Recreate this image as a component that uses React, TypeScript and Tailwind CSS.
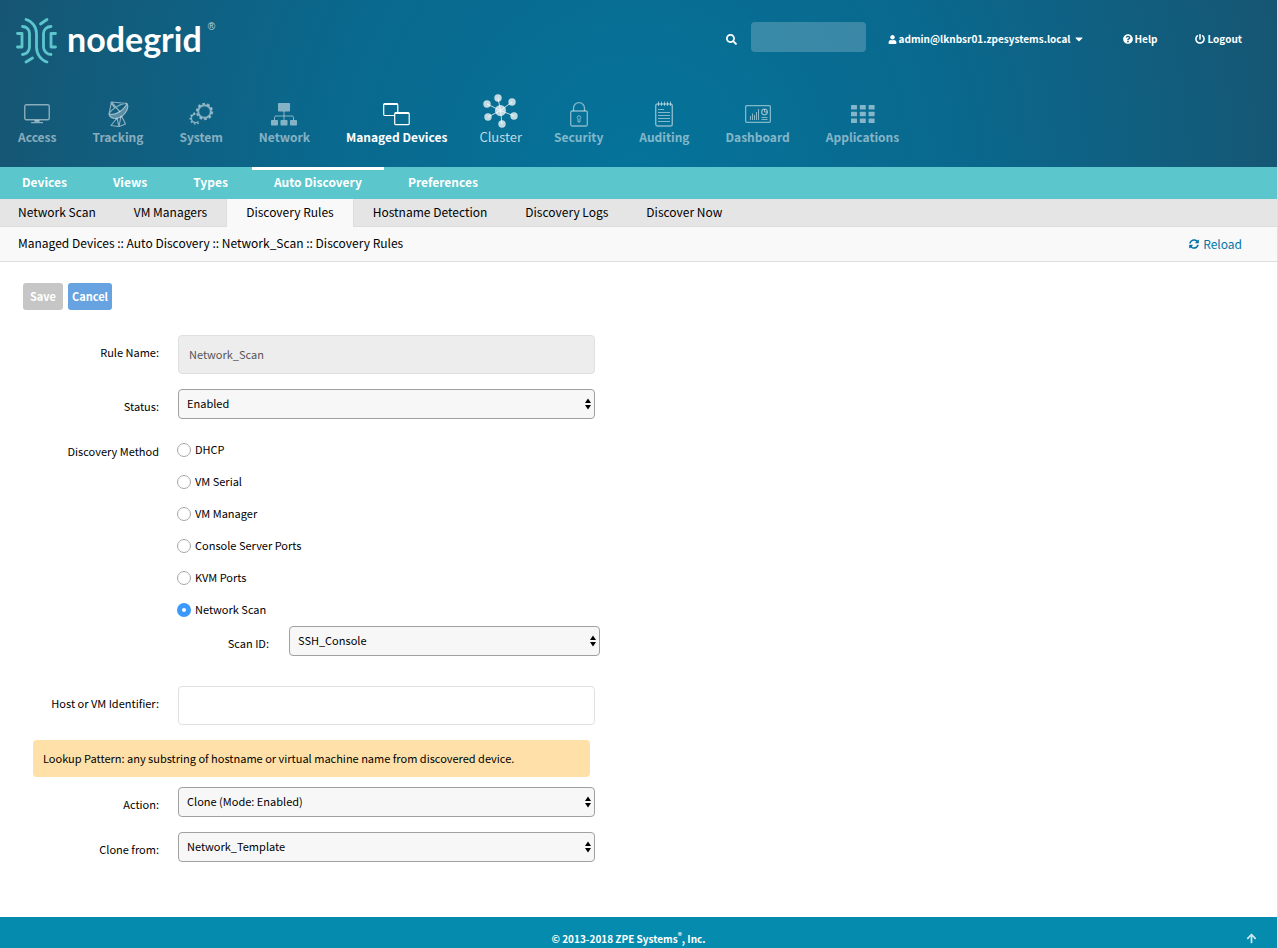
import { useState } from 'react'
import type { ReactNode } from 'react'
import { FaSearch, FaUser, FaCaretDown, FaQuestionCircle, FaPowerOff, FaSyncAlt, FaArrowUp } from 'react-icons/fa'

const clusterNodes = [
  [15, 4],
  [29, 8],
  [31, 22],
  [19, 30],
  [5, 23],
  [4, 10],
]

const icons: Record<string, ReactNode> = {
  Access: (
    <svg width="26" height="20" viewBox="0 0 26 20" fill="none" stroke="currentColor">
      <rect x="0.75" y="0.75" width="24.5" height="15" rx="1.5" strokeWidth="1.4" />
      <path d="M10.5 16h5v2H19v1.2H7V18h3.5z" fill="currentColor" stroke="none" />
    </svg>
  ),
  Tracking: (
    <svg width="22" height="26" viewBox="0 0 22 26" fill="none" stroke="currentColor" strokeWidth="1.2" strokeLinejoin="round">
      <path d="M20 2.5C23 8 16 18 7 17.5 4 17 2.5 15 2 13 8 15 17 9 20 2.5z" fill="currentColor" fillOpacity="0.6" />
      <path d="M20 2.5C15 2 4 8 2 13M2 13 4.5 1 20 2.5M4.5 1 13 11M3.5 1.5 8 7" />
      <path d="M10 17 4 24.5 12 25.5 18.5 23 14.5 15M10 17l2 8.5L14 15" />
    </svg>
  ),
  System: (
    <svg width="26" height="24" viewBox="0 0 26 24" fill="none" stroke="currentColor">
      <circle cx="16.5" cy="9.5" r="6.3" strokeWidth="2" />
      <circle cx="16.5" cy="9.5" r="7.8" strokeWidth="1.8" strokeDasharray="2.8 2.1" />
      <path d="M10.5 19.5A4.3 4.3 0 1 1 7.5 12" strokeWidth="1.4" />
      <path d="M10.8 21A5.5 5.5 0 1 1 7.5 11" strokeWidth="1.4" strokeDasharray="1.7 1.9" />
    </svg>
  ),
  Network: (
    <svg width="26" height="23" viewBox="0 0 26 23" fill="currentColor">
      <rect x="7" y="0" width="12" height="8.5" rx="0.8" />
      <rect x="0" y="17" width="7" height="5.5" rx="0.8" />
      <rect x="9.5" y="17" width="7" height="5.5" rx="0.8" />
      <rect x="19" y="17" width="7" height="5.5" rx="0.8" />
      <path d="M13 8v9M3.5 17v-2.5q0-1.5 1.5-1.5h16q1.5 0 1.5 1.5V17" fill="none" stroke="currentColor" />
    </svg>
  ),
  'Managed Devices': (
    <svg width="27" height="23" viewBox="0 0 27 23" fill="none" stroke="currentColor">
      <path d="M11.5 12.5H2q-1.3 0-1.3-1.3V2Q.7.7 2 .7h11.5q1.3 0 1.3 1.3v7" strokeWidth="1.2" />
      <path d="M1 1.3h13.5M12 10.3h14" strokeWidth="1.5" />
      <rect x="11.7" y="9.7" width="14.5" height="12" rx="1.3" strokeWidth="1.2" />
    </svg>
  ),
  Cluster: (
    <svg width="35" height="34" viewBox="0 0 35 34" fill="currentColor" stroke="currentColor">
      {clusterNodes.map(([x, y]) => (
        <g key={`${x}-${y}`}>
          <path d={`M17.5 16.5 ${x} ${y}`} strokeWidth="1" />
          <circle cx={x} cy={y} r="3.7" stroke="none" />
        </g>
      ))}
      <circle cx="17.5" cy="16.5" r="5.5" stroke="none" />
    </svg>
  ),
  Security: (
    <svg width="18" height="25" viewBox="0 0 18 25" fill="none" stroke="currentColor" strokeWidth="1.3">
      <rect x="0.7" y="9" width="16.6" height="15" rx="1.5" />
      <path d="M3.5 9V6.2a5.5 5.5 0 0 1 11 0V9" />
      <path d="M8 20v-3.2a1.7 1.7 0 1 1 2 0V20z" strokeWidth="1" />
    </svg>
  ),
  Auditing: (
    <svg width="18" height="26" viewBox="0 0 18 26" fill="none" stroke="currentColor">
      <rect x="0.7" y="3" width="16.6" height="22" rx="2" strokeWidth="1.4" />
      <path d="M3.5.5V5M6.5.5V5M9.5.5V5M12.5.5V5M15.5.5V5" />
      <path d="M3 8.5h6M3 11.5h12M3 14.5h12M3 17.5h12M3 20.5h12" />
    </svg>
  ),
  Dashboard: (
    <svg width="26" height="18" viewBox="0 0 26 18" fill="none" stroke="currentColor">
      <rect x="0.6" y="0.6" width="24.8" height="16.8" rx="1.5" strokeWidth="1.3" />
      <path d="M5.5 15v-4M7.5 15V8.5M9.5 15v-5M11.5 15V7M13.5 15V4" />
      <circle cx="19.5" cy="7" r="2.8" strokeWidth="1.3" />
      <path d="M19.5 4v3h3M16.5 12.5h6M16.5 14.5h6" />
    </svg>
  ),
  Applications: (
    <svg width="24" height="18" viewBox="0 0 24 18" fill="currentColor">
      {[0, 6.8, 13.6].map((y) => [0, 8.8, 17.6].map((x) => <rect key={`${x}-${y}`} x={x} y={y} width="6" height="4.4" rx="0.5" />))}
    </svg>
  ),
}

const mainNav = Object.keys(icons)
const subNav = ['Devices', 'Views', 'Types', 'Auto Discovery', 'Preferences']
const tabs = ['Network Scan', 'VM Managers', 'Discovery Rules', 'Hostname Detection', 'Discovery Logs', 'Discover Now']
const methods = ['DHCP', 'VM Serial', 'VM Manager', 'Console Server Ports', 'KVM Ports', 'Network Scan']

function Logo() {
  return (
    <a href="#" className="flex items-start text-white">
      <svg width="41" height="47" viewBox="0 0 41 47" fill="none" stroke="#5cc6cc" strokeWidth="2.8" strokeLinecap="round" strokeLinejoin="round">
        <path d="M1.5 16.5H6V30H1.5M39.5 16.5H35V30h4.5" />
        <path d="M6.5 9.5c4 0 7 3 7 7V30c0 4-3 7.5-7 7.5M35 9.5c-4 0-7.5 3-7.5 7V30c0 4 3.5 7.5 7.5 7.5" />
        <path d="M10 2.5c6 1.5 10.5 7.5 10.5 14V30c0 7 4.5 13.500 10.500 15" />
        <path d="M24.5 7 31 2.5M10 45l6.500-4" />
      </svg>
      <span className="ml-2.5 font-[Lato] text-[34px] leading-[44px] font-bold">nodegrid</span>
      <span className="ml-1.5 font-['Liberation_Sans',sans-serif] text-[10px] leading-5 opacity-70">®</span>
    </a>
  )
}

function Select({ id, value }: { id: string; value: string }) {
  return (
    <div className="relative">
      <select
        id={id}
        defaultValue={value}
        className="block h-[30px] w-full appearance-none rounded border border-[#a0a0a0] bg-[#f7f7f7] px-2 pb-0.5 text-[11px]"
      >
        <option>{value}</option>
      </select>
      <svg className="pointer-events-none absolute right-1 top-[9px]" width="6" height="12" viewBox="0 0 6 12">
        <path d="M3 0.5l3 4.5H0zM3 11.5l3-4.5H0z" />
      </svg>
    </div>
  )
}

function Row({ label, id, children }: { label: string; id: string; children: ReactNode }) {
  return (
    <div className="flex gap-[19px]">
      <label htmlFor={id} className="w-[159px] shrink-0 pt-[9px] text-right">
        {label}
      </label>
      <div className="w-full max-w-[417px]">{children}</div>
    </div>
  )
}

export default function App() {
  const [method, setMethod] = useState('Network Scan')

  return (
    <div className="flex min-h-screen flex-col border-r border-[#dddddd] bg-white font-['Noto_Sans_CJK_SC',sans-serif] text-[11px] leading-4 text-black">
      {/* Header */}
      <header className="flex h-[167px] flex-col justify-between bg-[radial-gradient(circle_at_50%_100%,#05739a_0%,#0a688d_50%,#165673_100%)] text-white">
        <div className="flex items-start justify-between pl-4 pr-[35px] pt-[17px]">
          <Logo />
          <div className="flex items-center pt-[5px] text-[10px] font-bold">
            <label htmlFor="search" aria-label="Search" className="pt-1">
              <FaSearch size={11} />
            </label>
            <input id="search" className="ml-3.5 h-[30px] w-[115px] rounded bg-white/20 px-2" />
            <button className="ml-[22px] flex items-center gap-0.5 pt-1">
              <FaUser size={9} />
              admin@lknbsr01.zpesystems.local
              <FaCaretDown size={12} />
            </button>
            <a href="#" className="ml-[38px] flex items-center gap-0.5 pt-1">
              <FaQuestionCircle size={10} />
              Help
            </a>
            <a href="#" className="ml-[38px] flex items-center gap-0.5 pt-1">
              <FaPowerOff size={10} />
              Logout
            </a>
          </div>
        </div>
        <nav className="flex items-end gap-9 pb-5 pl-[18px]">
          {mainNav.map((name) => (
            <a
              key={name}
              href="#"
              className={
                name === 'Managed Devices'
                  ? 'flex flex-col items-center text-xs font-bold'
                  : name === 'Cluster'
                    ? '-mx-1 flex flex-col items-center text-[13px] text-white/75'
                    : 'flex flex-col items-center text-xs font-bold text-white/50'
              }
            >
              <span className={name === 'Cluster' ? 'flex h-8 items-center' : 'flex h-[26px] items-center'}>{icons[name]}</span>
              <span className="leading-5">{name}</span>
            </a>
          ))}
        </nav>
      </header>

      {/* Section menus */}
      <nav className="flex h-8 gap-0.5 bg-[#5bc6cc] text-xs font-bold text-white">
        {subNav.map((name) => (
          <a
            key={name}
            href="#"
            className={name === 'Auto Discovery' ? 'border-t-[3px] border-white px-[22px] pt-0.5 leading-5' : 'px-[22px] pt-[5px] leading-5'}
          >
            {name}
          </a>
        ))}
      </nav>
      <nav className="flex h-7 border-b border-[#dddddd] bg-[#e5e5e5] text-xs">
        {tabs.map((name) => (
          <a
            key={name}
            href="#"
            className={
              name === 'Discovery Rules'
                ? '-mb-px border-x border-[#dddddd] bg-[#f9f9f9] px-[19px] pt-[3px] leading-5'
                : 'px-[19px] pt-[3px] leading-5 first:pl-[18px]'
            }
          >
            {name}
          </a>
        ))}
      </nav>
      <div className="flex h-[35px] items-center justify-between border-b border-[#dddddd] bg-[#f9f9f9] pl-[18px] pr-[35px] text-xs">
        <span className="pb-0.5">Managed Devices :: Auto Discovery :: Network_Scan :: Discovery Rules</span>
        <a href="#" className="flex items-center gap-1 text-[#0374a8]">
          <FaSyncAlt size={10} />
          Reload
        </a>
      </div>

      {/* Rule form */}
      <form className="pb-[55px] pt-[21px]" onSubmit={(e) => e.preventDefault()}>
        <div className="flex gap-[5px] pl-[23px] font-bold text-white">
          <button disabled className="h-[27px] w-10 rounded-[3px] bg-[#c6c6c6] pb-px">
            Save
          </button>
          <button type="button" className="h-[27px] w-11 rounded-[3px] bg-[#67a3e0] pb-px">
            Cancel
          </button>
        </div>

        <div className="mt-[25px] flex flex-col gap-[15px]">
          <Row label="Rule Name:" id="rule-name">
            <input
              id="rule-name"
              disabled
              defaultValue="Network_Scan"
              className="block h-[39px] w-full rounded border border-[#e0e0e0] bg-[#ededed] px-2.5 pb-0.5 text-[#555555]"
            />
          </Row>
          <Row label="Status:" id="status">
            <Select id="status" value="Enabled" />
          </Row>
        </div>

        <fieldset className="mt-[15px] flex gap-[18px]">
          <legend className="float-left w-[159px] shrink-0 pt-[9px] text-right">Discovery Method</legend>
          <div className="w-full max-w-[423px]">
            {methods.map((name) => (
              <label key={name} className="flex h-8 items-center gap-1">
                <input
                  type="radio"
                  name="method"
                  checked={method === name}
                  onChange={() => setMethod(name)}
                  className="size-3.5 appearance-none rounded-full border border-[#a6a6a6] bg-white checked:border-[5px] checked:border-[#3b99fc]"
                />
                <span className="pb-0.5">{name}</span>
              </label>
            ))}
            <div className="flex gap-5">
              <label htmlFor="scan-id" className="w-[92px] shrink-0 pt-[9px] text-right">
                Scan ID:
              </label>
              <div className="grow">
                <Select id="scan-id" value="SSH_Console" />
              </div>
            </div>
          </div>
        </fieldset>

        <div className="mt-[30px]">
          <Row label="Host or VM Identifier:" id="host">
            <input id="host" className="block h-[39px] w-full rounded border border-[#e0e0e0] px-2.5" />
          </Row>
        </div>
        <p className="ml-[33px] mt-[15px] max-w-[557px] rounded bg-[#ffe0a8] px-2.5 py-2.5 leading-[17px]">
          Lookup Pattern: any substring of hostname or virtual machine name from discovered device.
        </p>
        <div className="mt-2.5 flex flex-col gap-[15px]">
          <Row label="Action:" id="action">
            <Select id="action" value="Clone (Mode: Enabled)" />
          </Row>
          <Row label="Clone from:" id="clone-from">
            <Select id="clone-from" value="Network_Template" />
          </Row>
        </div>
      </form>

      <footer className="mt-auto grid h-[31px] grid-cols-[1fr_auto_1fr] bg-[#048bad] pr-5 pt-3.5 text-[10px] font-bold text-white">
        <p className="col-start-2">
          © 2013-2018 ZPE Systems<sup className="text-[8px]">®</sup>, Inc.
        </p>
        <a href="#" aria-label="Back to top" className="justify-self-end pt-0.5 text-white/80">
          <FaArrowUp size={11} />
        </a>
      </footer>
    </div>
  )
}
